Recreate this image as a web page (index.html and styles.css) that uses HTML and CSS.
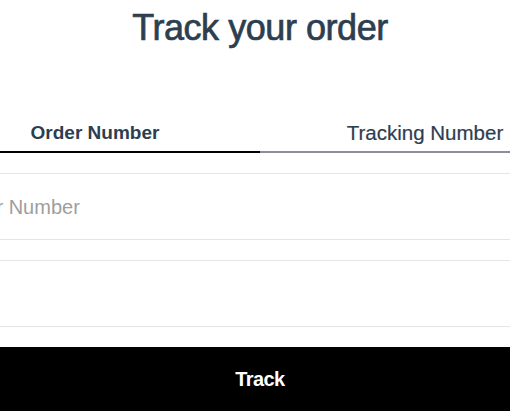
FILE: index.html
```html
<!DOCTYPE html>
<html lang="en">
<head>
<meta charset="utf-8">
<title>Track your order</title>
<link rel="stylesheet" href="styles.css">
</head>
<body>
<div class="page">
  <h1 class="title">Track your order</h1>
  <div class="tabs">
    <div class="tab tab-active">Order Number</div>
    <div class="tab">Tracking Number</div>
  </div>
  <form class="form">
    <input class="field" type="text" placeholder="Order Number">
    <input class="field" type="text">
    <button class="track-btn" type="button">Track</button>
  </form>
</div>
</body>
</html>
```

FILE: styles.css
```css
html, body {
  margin: 0;
  padding: 0;
  background: #ffffff;
  overflow: hidden;
}

body {
  font-family: "Liberation Sans", Arial, sans-serif;
  color: #2c3e50;
}

.page {
  width: 660px;
  margin-left: -70px;
}

.title {
  margin: 0;
  padding-top: 8px;
  font-size: 36px;
  line-height: 40px;
  font-weight: 400;
  text-align: center;
  letter-spacing: -0.45px;
  color: #2c3e50;
  -webkit-text-stroke: 0.7px #2c3e50;
}

.tabs {
  display: flex;
  margin-top: 73px;
}

.tab {
  flex: 1 1 0;
  text-align: center;
  font-size: 20.5px;
  line-height: 24px;
  padding-bottom: 6px;
  border-bottom: 2px solid #8e8e99;
  color: #2c3e50;
  -webkit-text-stroke: 0.2px #2c3e50;
}

.tab-active {
  font-weight: 700;
  font-size: 19px;
  border-bottom-color: #000000;
  -webkit-text-stroke: 0;
}

.form {
  display: flex;
  flex-direction: column;
  gap: 20px;
  margin-top: 20px;
}

.field {
  display: block;
  box-sizing: border-box;
  width: 100%;
  height: 67px;
  margin: 0;
  padding: 2px 0 0 21px;
  border: 1px solid #e5e5e5;
  border-radius: 0;
  outline: none;
  background: #ffffff;
  font-family: "Liberation Sans", Arial, sans-serif;
  font-size: 20px;
  color: #2c3e50;
}

.field::placeholder {
  color: #9e9e9e;
  opacity: 1;
}

.track-btn {
  display: block;
  width: 100%;
  height: 70px;
  margin: 0;
  padding: 0 0 6px;
  border: 0;
  border-radius: 0;
  background: #000000;
  color: #ffffff;
  font-family: "Liberation Sans", Arial, sans-serif;
  font-size: 20px;
  font-weight: 700;
  letter-spacing: -0.6px;
}
```
